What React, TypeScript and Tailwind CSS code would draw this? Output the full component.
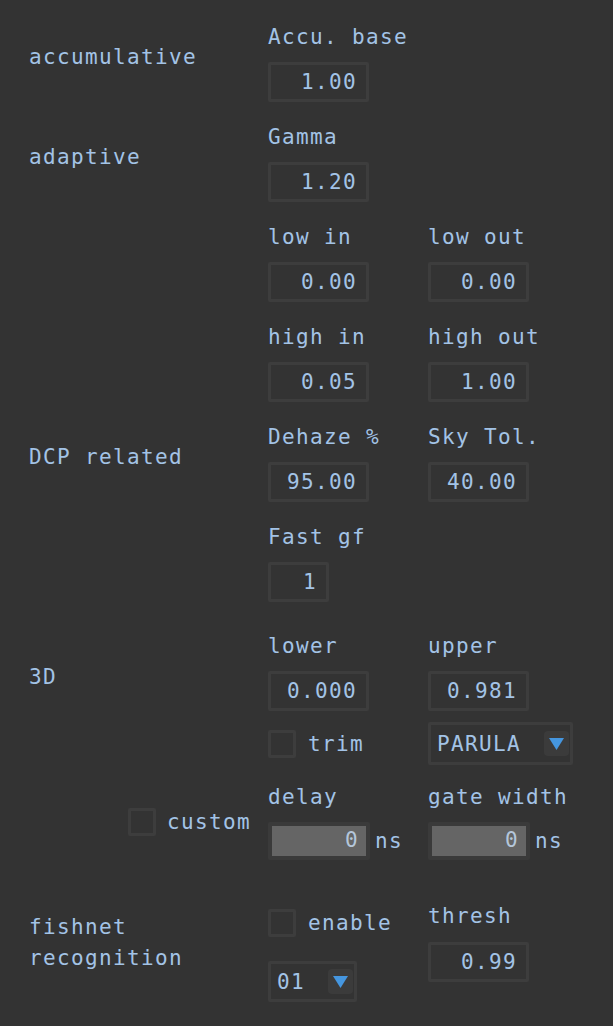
import type { ReactNode } from 'react';

// ImGui-style settings panel: labels on the left, compact numeric fields on the right

function Label({ children }: { children: ReactNode }) {
    return <div className="h-[26px] leading-[26px] whitespace-pre">{children}</div>;
}

function NumBox({ value, narrow = false }: { value: string; narrow?: boolean }) {
    return (
        <div
            className={
                (narrow ? 'w-[61px] ' : 'w-[101px] ') +
                'h-[40px] border-[3px] border-[#3d3d3d] rounded-[2px] flex items-center justify-end pr-[9px] leading-[26px]'
            }
        >
            {value}
        </div>
    );
}

function Field({ label, value, narrow }: { label: string; value: string; narrow?: boolean }) {
    return (
        <div className="w-[160px] flex flex-col">
            <Label>{label}</Label>
            <div className="mt-[12px]">
                <NumBox value={value} narrow={narrow} />
            </div>
        </div>
    );
}

function CheckBox() {
    return <div className="w-[28px] h-[28px] border-[3px] border-[#3d3d3d] rounded-[2px] shrink-0" />;
}

function Arrow() {
    return (
        <div className="w-[25px] h-[25px] rounded-[4px] bg-[#3b3b3b] flex items-center justify-center">
            <svg width="15" height="12" viewBox="0 0 15 12">
                <polygon points="0,0 15,0 7.5,12" fill="#4596df" />
            </svg>
        </div>
    );
}

function Combo({ value, wide = false }: { value: string; wide?: boolean }) {
    return (
        <div
            className={
                (wide ? 'w-[145px] h-[43px] ' : 'w-[89px] h-[41px] ') +
                'border-[3px] border-[#3d3d3d] rounded-[2px] flex items-center justify-between pl-[6px] pr-[1px]'
            }
        >
            <span className="leading-[26px]">{value}</span>
            <Arrow />
        </div>
    );
}

function GrayBox({ value }: { value: string }) {
    return (
        <div className="flex items-center">
            <div className="w-[102px] h-[38px] border-[4px] border-[#3a3a3a] rounded-[2px] bg-[#656565] flex items-center justify-end pr-[7px] text-[#b4c6da]">
                {value}
            </div>
            <span className="ml-[5px] leading-[26px]">ns</span>
        </div>
    );
}

function Side({ children, pt }: { children?: ReactNode; pt: string }) {
    return <div className={'w-[268px] pl-[29px] leading-[26px] ' + pt}>{children}</div>;
}

export default function App() {
    return (
        <div className="min-h-screen w-full bg-[#333333] text-[#a3c3e6] font-['DejaVu_Sans_Mono',monospace] text-[21px] tracking-[1.36px] pt-[24px]">
            {/* accumulative */}
            <div className="flex">
                <Side pt="pt-[20px]">accumulative</Side>
                <Field label="Accu. base" value="1.00" />
            </div>

            {/* adaptive */}
            <div className="flex mt-[22px]">
                <Side pt="pt-[20px]">adaptive</Side>
                <Field label="Gamma" value="1.20" />
            </div>

            <div className="flex mt-[22px]">
                <Side pt="pt-0" />
                <Field label="low in" value="0.00" />
                <Field label="low out" value="0.00" />
            </div>

            <div className="flex mt-[22px]">
                <Side pt="pt-0" />
                <Field label="high in" value="0.05" />
                <Field label="high out" value="1.00" />
            </div>

            {/* DCP */}
            <div className="flex mt-[22px]">
                <Side pt="pt-[20px]">DCP related</Side>
                <Field label="Dehaze %" value="95.00" />
                <Field label="Sky Tol." value="40.00" />
            </div>

            <div className="flex mt-[22px]">
                <Side pt="pt-0" />
                <Field label="Fast gf" value="1" narrow />
            </div>

            {/* 3D */}
            <div className="flex mt-[31px]">
                <Side pt="pt-[31px]">3D</Side>
                <Field label="lower" value="0.000" />
                <Field label="upper" value="0.981" />
            </div>

            <div className="flex mt-[11px]">
                <Side pt="pt-0" />
                <div className="w-[160px] h-[43px] flex items-center gap-[12px]">
                    <CheckBox />
                    <span className="leading-[26px]">trim</span>
                </div>
                <Combo value="PARULA" wide />
            </div>

            {/* gating */}
            <div className="flex mt-[19px]">
                <div className="w-[268px] pl-[128px] pt-[24px]">
                    <div className="flex items-center gap-[11px]">
                        <CheckBox />
                        <span className="leading-[26px]">custom</span>
                    </div>
                </div>
                <div className="w-[160px] flex flex-col">
                    <Label>delay</Label>
                    <div className="mt-[12px]">
                        <GrayBox value="0" />
                    </div>
                </div>
                <div className="w-[160px] flex flex-col">
                    <Label>gate width</Label>
                    <div className="mt-[12px]">
                        <GrayBox value="0" />
                    </div>
                </div>
            </div>

            {/* fishnet */}
            <div className="flex mt-[43px] pb-[16px]">
                <div className="w-[268px] pl-[29px] pt-[9px] leading-[31px]">
                    <div>fishnet</div>
                    <div>recognition</div>
                </div>
                <div className="w-[160px] flex flex-col pt-[6px]">
                    <div className="flex items-center gap-[12px]">
                        <CheckBox />
                        <span className="leading-[26px]">enable</span>
                    </div>
                    <div className="mt-[24px]">
                        <Combo value="01" />
                    </div>
                </div>
                <div className="w-[160px] flex flex-col">
                    <Label>thresh</Label>
                    <div className="mt-[13px]">
                        <NumBox value="0.99" />
                    </div>
                </div>
            </div>
        </div>
    );
}
